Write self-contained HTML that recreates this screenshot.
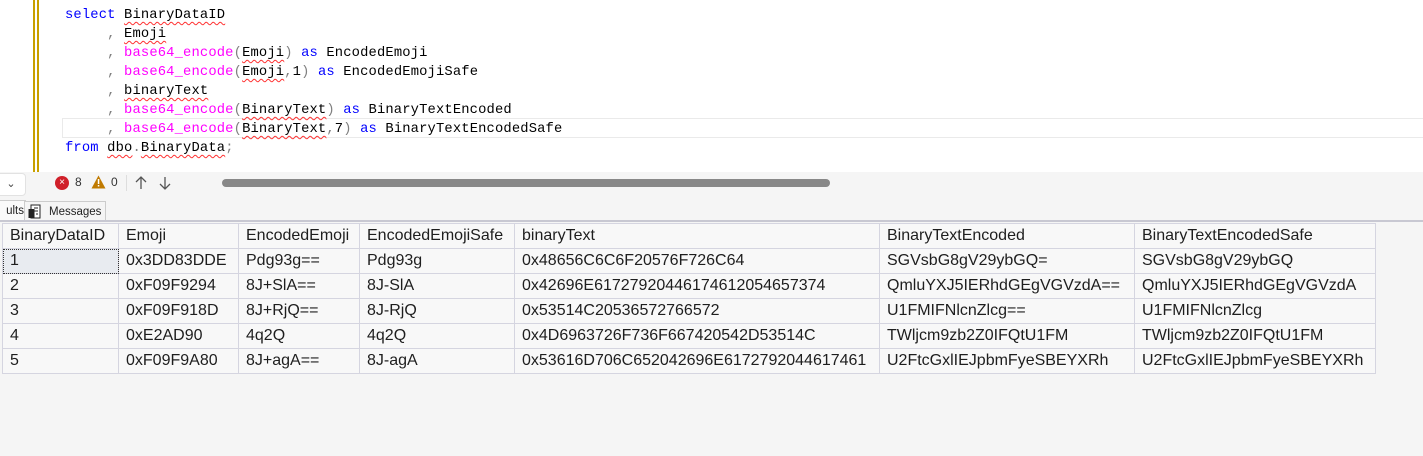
<!DOCTYPE html>
<html><head><style>
body{margin:0;width:1423px;height:456px;overflow:hidden;background:#f5f5f5;position:relative;font-family:"Liberation Sans",sans-serif}
.ed{position:absolute;left:0;top:0;width:1423px;height:172px;background:#fff}
.code{position:absolute;left:65px;top:6px;font-family:"Liberation Mono",monospace;font-size:13.8px;letter-spacing:0.15px;line-height:19px;white-space:pre;color:#000}
.k{color:#0000ff}.f{color:#ff00ff}.g{color:#808080}
.sq{text-decoration:underline wavy #ff3030;text-decoration-thickness:1px;text-underline-offset:3px}
.tb{position:absolute;left:0;top:172px;width:1423px;height:25px;background:#f5f5f5}
table{position:absolute;left:2px;top:223px;border-collapse:collapse;font-size:16px;color:#1e1e1e;background:#f8f8f8}
td{border:1px solid #d5d5e0;height:24px;padding:0 0 0 7px;white-space:nowrap}
</style></head><body>
<div class="ed">
<div style="position:absolute;left:33px;top:0;width:2px;height:172px;background:#c8a000"></div>
<div style="position:absolute;left:37px;top:0;width:2px;height:172px;background:#c8a000"></div>
<div style="position:absolute;left:62px;top:118px;width:1361px;height:18px;border:1px solid #eaeaea;border-right:none"></div>
<div class="code"><span class="k">select</span> <span class="sq">BinaryDataID</span>
     <span class="g">,</span> <span class="sq">Emoji</span>
     <span class="g">,</span> <span class="f">base64_encode</span><span class="g">(</span><span class="sq">Emoji</span><span class="g">)</span> <span class="k">as</span> EncodedEmoji
     <span class="g">,</span> <span class="f">base64_encode</span><span class="g">(</span><span class="sq">Emoji</span><span class="g">,</span>1<span class="g">)</span> <span class="k">as</span> EncodedEmojiSafe
     <span class="g">,</span> <span class="sq">binaryText</span>
     <span class="g">,</span> <span class="f">base64_encode</span><span class="g">(</span><span class="sq">BinaryText</span><span class="g">)</span> <span class="k">as</span> BinaryTextEncoded
     <span class="g">,</span> <span class="f">base64_encode</span><span class="g">(</span><span class="sq">BinaryText</span><span class="g">,</span>7<span class="g">)</span> <span class="k">as</span> BinaryTextEncodedSafe
<span class="k">from</span> <span class="sq">dbo</span><span class="g">.</span><span class="sq">BinaryData</span><span class="g">;</span></div>
</div>
<div class="tb">
<div style="position:absolute;left:-4px;top:1px;width:28px;height:21px;background:#fff;border:1px solid #e2e2e2;border-radius:4px;font-size:11px;color:#444;text-align:center;line-height:21px">⌄</div>
<div style="position:absolute;left:55px;top:4px;width:14px;height:14px;border-radius:50%;background:#d0202a;color:#fff;font-size:10px;line-height:14px;text-align:center">×</div>
<div style="position:absolute;left:75px;top:3px;font-size:12px;color:#333">8</div>
<svg style="position:absolute;left:91px;top:3px" width="15" height="14"><path d="M7.5 0.5L14.5 13.5H0.5Z" fill="#c07a00"/><rect x="6.8" y="4" width="1.5" height="5" fill="#fff"/><rect x="6.8" y="10" width="1.5" height="1.5" fill="#fff"/></svg>
<div style="position:absolute;left:111px;top:3px;font-size:12px;color:#333">0</div>
<div style="position:absolute;left:126px;top:3px;width:1px;height:16px;background:#ddd"></div>
<svg style="position:absolute;left:134px;top:4px" width="40" height="14" fill="none" stroke="#555" stroke-width="1.3"><path d="M7 13V1M2 6L7 1L12 6"/><path d="M31 1V13M26 8L31 13L36 8"/></svg>
<div style="position:absolute;left:222px;top:7px;width:608px;height:8px;border-radius:4px;background:#888"></div>
</div>
<div style="position:absolute;left:0;top:200px;width:24px;height:20px;background:#fafafa;border:1px solid #ccc;border-left:none;border-bottom:none;font-size:11.5px;line-height:21px;color:#222;text-align:right;padding-right:1px;overflow:hidden">ults</div>
<div style="position:absolute;left:24px;top:201px;width:80px;height:19px;border:1px solid #ccc;border-bottom:none;background:#f5f5f5;font-size:11.5px;line-height:20px;color:#222">
<svg style="position:absolute;left:3px;top:2px" width="13" height="15"><rect x="3" y="1" width="9" height="13" fill="#fff" stroke="#222"/><rect x="0.5" y="5" width="6" height="9" fill="#222"/><path d="M6 4h4M6 7h4M8 10h2" stroke="#222"/></svg>
<span style="position:absolute;left:24px">Messages</span></div>
<div style="position:absolute;left:0;top:220px;width:1423px;height:2px;background:#c8c8d2"></div>
<table>
<tr><td style="width:108px">BinaryDataID</td><td style="width:112px">Emoji</td><td style="width:113px">EncodedEmoji</td><td style="width:147px">EncodedEmojiSafe</td><td style="width:357px">binaryText</td><td style="width:247px">BinaryTextEncoded</td><td style="width:233px">BinaryTextEncodedSafe</td></tr>
<tr><td style="background:#e8ebf0;outline:1px dotted #333;outline-offset:-1px">1</td><td>0x3DD83DDE</td><td>Pdg93g==</td><td>Pdg93g</td><td>0x48656C6C6F20576F726C64</td><td>SGVsbG8gV29ybGQ=</td><td>SGVsbG8gV29ybGQ</td></tr>
<tr><td>2</td><td>0xF09F9294</td><td>8J+SlA==</td><td>8J-SlA</td><td>0x42696E61727920446174612054657374</td><td>QmluYXJ5IERhdGEgVGVzdA==</td><td>QmluYXJ5IERhdGEgVGVzdA</td></tr>
<tr><td>3</td><td>0xF09F918D</td><td>8J+RjQ==</td><td>8J-RjQ</td><td>0x53514C20536572766572</td><td>U1FMIFNlcnZlcg==</td><td>U1FMIFNlcnZlcg</td></tr>
<tr><td>4</td><td>0xE2AD90</td><td>4q2Q</td><td>4q2Q</td><td>0x4D6963726F736F667420542D53514C</td><td>TWljcm9zb2Z0IFQtU1FM</td><td>TWljcm9zb2Z0IFQtU1FM</td></tr>
<tr><td>5</td><td>0xF09F9A80</td><td>8J+agA==</td><td>8J-agA</td><td>0x53616D706C652042696E6172792044617461</td><td>U2FtcGxlIEJpbmFyeSBEYXRh</td><td>U2FtcGxlIEJpbmFyeSBEYXRh</td></tr>
</table>
</body></html>
